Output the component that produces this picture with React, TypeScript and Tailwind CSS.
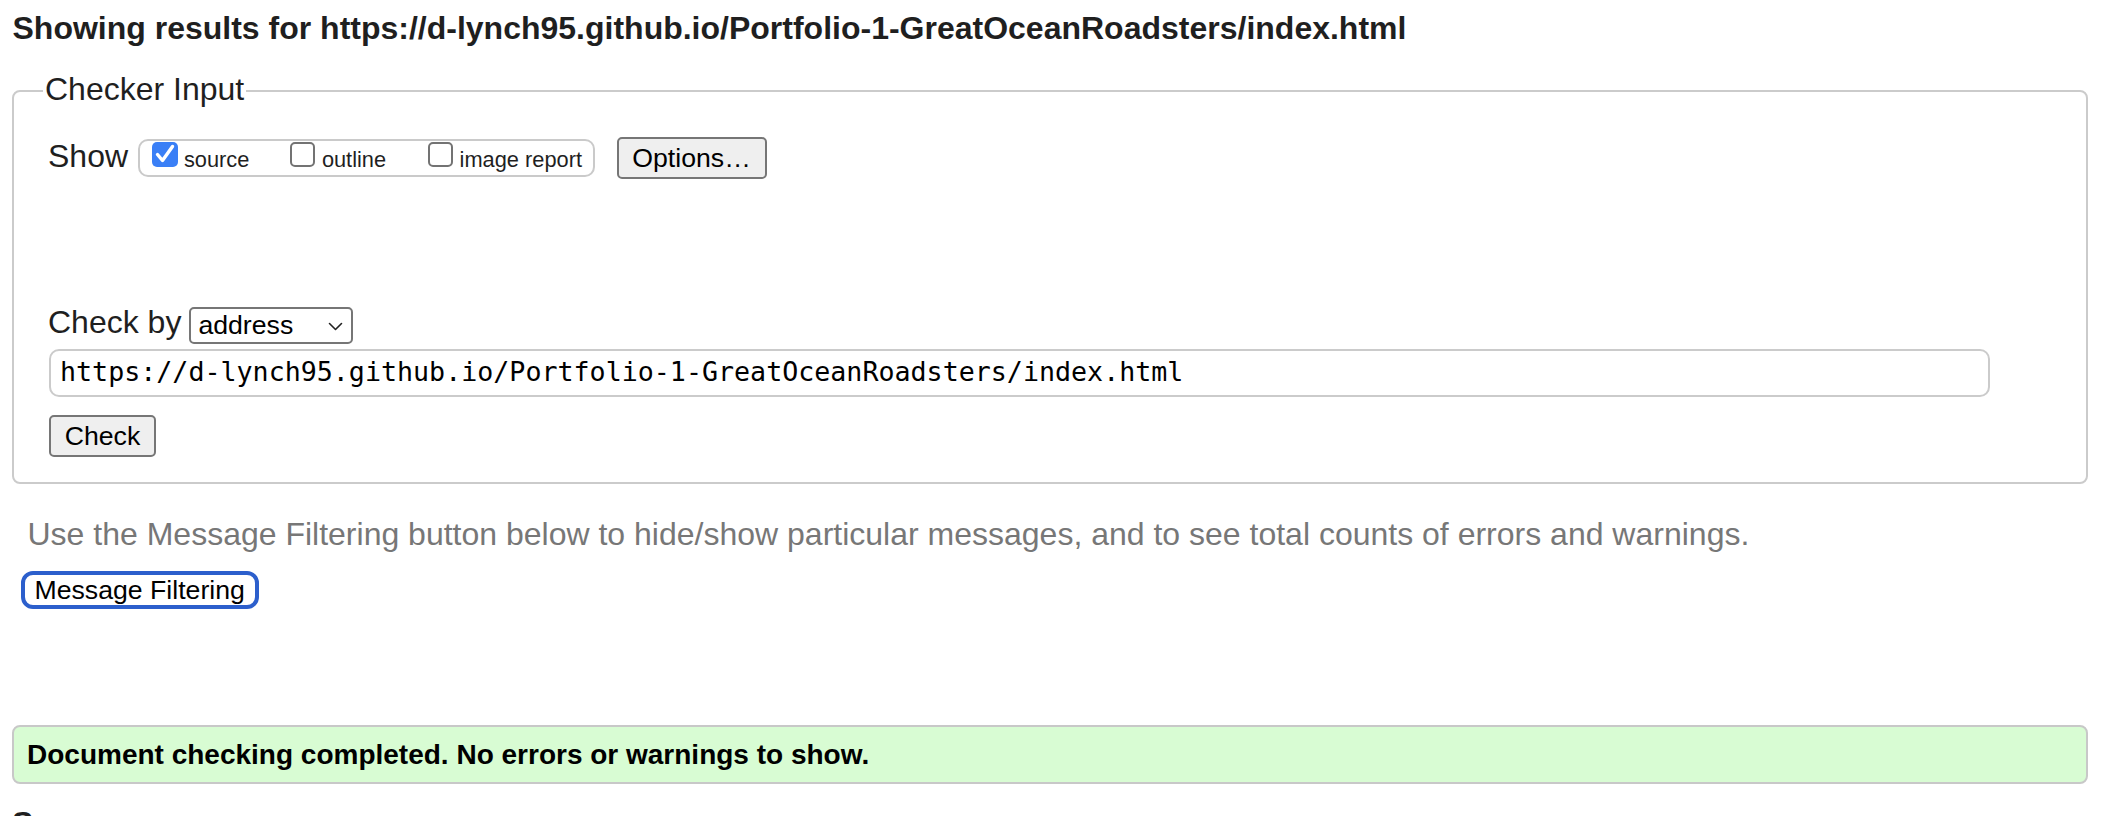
import React from "react";

function Box({ checked }: { checked?: boolean }) {
  if (checked) {
    return (
      <div className="w-[26px] h-[25px] mb-[4.6px] rounded-[5px] bg-[#3a7ff6] flex items-center justify-center shrink-0">
        <svg width="26" height="25" viewBox="0 0 26 25" fill="none">
          <path d="M5.5 12.5 L10.5 18.5 L20.5 4.5" stroke="#ffffff" strokeWidth="3.4" strokeLinecap="round" strokeLinejoin="round" />
        </svg>
      </div>
    );
  }
  return <div className="w-[25px] h-[25px] mb-[4.6px] rounded-[5px] border-2 border-[#737373] bg-white shrink-0" />;
}

export default function App() {
  return (
    <div className="min-h-screen bg-white pl-[12px] pr-[32px] font-['Liberation_Sans',Arial,sans-serif] text-[#1f1f1f]">
      <h1 className="text-[32px] font-bold leading-[37px] pt-[10px] ml-[0.5px]">
        Showing results for https://d-lynch95.github.io/Portfolio-1-GreatOceanRoadsters/index.html
      </h1>

      <div className="mt-[43px] border-2 border-[#cbcbcb] rounded-[8px] pl-[29px] pb-[25.3px]">
        <div className="-mt-[21.5px] w-fit bg-white px-[2px] text-[32px] leading-[37px]">Checker Input</div>
        <div className="ml-[5px]">
          <div className="mt-[29.5px] flex items-center h-[42px]">
            <span className="text-[32px] leading-[37px] mb-[4px]">Show</span>
            <div className="ml-[9.5px] w-[457px] h-[38px] border-2 border-[#cacaca] rounded-[10px] flex items-end pl-[12px] pb-[3.4px] text-[21.8px] leading-[24px]">
              <Box checked />
              <span className="ml-[6.4px]">source</span>
              <div className="ml-[40.5px]"><Box /></div>
              <span className="ml-[7px]">outline</span>
              <div className="ml-[41.5px]"><Box /></div>
              <span className="ml-[7px]">image report</span>
            </div>
            <div className="ml-[22px] w-[150px] h-[42px] border-2 border-[#767676] rounded-[5px] bg-[#efefef] text-[26.67px] leading-none text-black flex items-center justify-center">
              Options…
            </div>
          </div>

          <div className="mt-[127.7px] flex items-start h-[37px]">
            <span className="text-[32px] leading-[37px] -mt-[3px]">Check by</span>
            <div className="ml-[8px] w-[164px] h-[37px] border-2 border-[#767676] rounded-[5px] bg-white flex items-center pl-[7px] text-[26.67px] leading-none text-black">
              <span>address</span>
              <svg className="ml-auto mr-[8px] mt-[2px]" width="15" height="9" viewBox="0 0 15 9" fill="none">
                <path d="M1.5 1.5 L7.5 7.5 L13.5 1.5" stroke="#222" strokeWidth="1.6" strokeLinecap="round" strokeLinejoin="round" />
              </svg>
            </div>
          </div>

          <div className="mt-[5px] ml-[1px] w-[1941px] h-[48.4px] border-2 border-[#cbcbcb] rounded-[10px] bg-white flex items-center pl-[9px] pb-[2px] font-['DejaVu_Sans_Mono',monospace] text-[26.67px] leading-none text-black">
            https://d-lynch95.github.io/Portfolio-1-GreatOceanRoadsters/index.html
          </div>

          <div className="mt-[17.6px] ml-[1px] w-[107px] h-[42.4px] border-2 border-[#767676] rounded-[5px] bg-[#efefef] text-[26.67px] leading-none text-black flex items-center justify-center">
            Check
          </div>
        </div>
      </div>

      <p className="mt-[31.4px] ml-[15.5px] text-[32px] leading-[37px] text-[#777777]">
        Use the Message Filtering button below to hide/show particular messages, and to see total counts of errors and warnings.
      </p>

      <div className="mt-[18.3px] ml-[8.7px] w-[238px] h-[37.6px] border-[4px] border-[#2c5fcc] rounded-[12px] bg-white text-[26.67px] leading-none text-black flex items-center justify-center">
        Message Filtering
      </div>

      <div className="mt-[116.7px] h-[59px] border-2 border-[#c8c8c8] rounded-[8px] bg-[#d8fcd3] flex items-center pl-[13px] text-[28px] font-bold leading-[32px] text-black">
        Document checking completed. No errors or warnings to show.
      </div>

      <h2 className="mt-[21px] text-[32px] font-bold leading-[37px] text-[#1f1f1f]">Source</h2>
    </div>
  );
}
